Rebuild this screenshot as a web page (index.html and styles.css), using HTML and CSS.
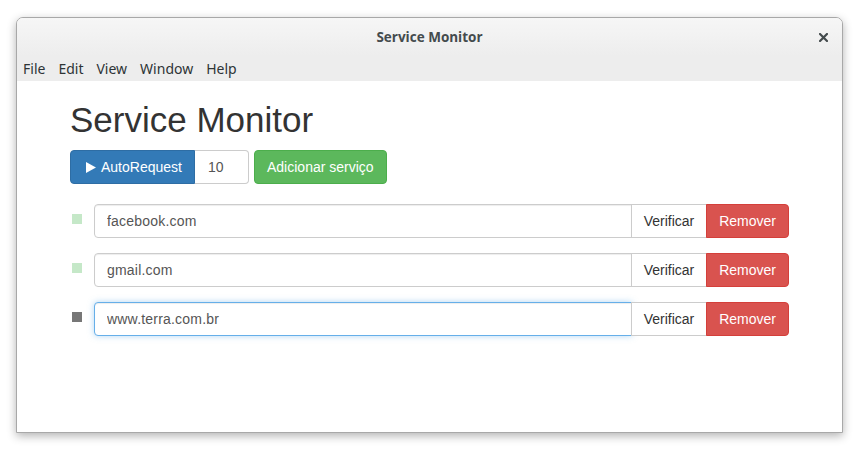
FILE: index.html
```html
<!DOCTYPE html>
<html>
<head>
<meta charset="utf-8">
<link rel="stylesheet" href="styles.css">
</head>
<body>
<div class="desktop">
  <div class="window">
    <div class="titlebar">
      <span class="title">Service Monitor</span>
      <span class="close">
        <svg width="9" height="9" viewBox="0 0 9 9"><path d="M1 1L8 8M8 1L1 8" stroke="#444b4d" stroke-width="2.2" stroke-linecap="square"/></svg>
      </span>
    </div>
    <div class="menubar">
      <span class="menu-item">File</span>
      <span class="menu-item">Edit</span>
      <span class="menu-item">View</span>
      <span class="menu-item">Window</span>
      <span class="menu-item">Help</span>
    </div>
    <div class="content">
      <h1 class="heading">Service Monitor</h1>
      <div class="toolbar">
        <button class="btn btn-primary btn-auto"><svg class="play" width="10" height="11" viewBox="0 0 10 11"><path d="M0 0L10 5.5L0 11Z" fill="#fff"/></svg>AutoRequest</button>
        <input class="num-input" type="text" value="10">
        <button class="btn btn-success btn-add">Adicionar serviço</button>
      </div>
      <div class="services">
        <div class="service-row">
          <span class="status status-ok"></span>
          <div class="input-group">
            <input class="form-control" type="text" value="facebook.com">
            <button class="btn btn-default">Verificar</button>
            <button class="btn btn-danger">Remover</button>
          </div>
        </div>
        <div class="service-row">
          <span class="status status-ok"></span>
          <div class="input-group">
            <input class="form-control" type="text" value="gmail.com">
            <button class="btn btn-default">Verificar</button>
            <button class="btn btn-danger">Remover</button>
          </div>
        </div>
        <div class="service-row">
          <span class="status status-unknown"></span>
          <div class="input-group">
            <input class="form-control focus" type="text" value="www.terra.com.br">
            <button class="btn btn-default">Verificar</button>
            <button class="btn btn-danger">Remover</button>
          </div>
        </div>
      </div>
    </div>
  </div>
</div>
</body>
</html>
```
FILE: styles.css
```css
html, body {
  margin: 0;
  padding: 0;
  background: #ffffff;
}
.desktop {
  padding: 17px 0 0 16px;
  width: 865px;
  height: 461px;
  box-sizing: border-box;
}
.window {
  width: 827px;
  height: 416px;
  box-sizing: border-box;
  border: 1px solid #a8a8a8;
  border-radius: 7px 7px 0 0;
  box-shadow: 0 3px 10px rgba(0, 0, 0, 0.3);
  display: flex;
  flex-direction: column;
  overflow: hidden;
  background: #fff;
}
.titlebar {
  height: 38px;
  flex: none;
  background: linear-gradient(#f6f6f6, #ededed);
  display: flex;
  align-items: center;
  justify-content: center;
  position: relative;
}
.title {
  font-family: "Open Sans", "Noto Sans", sans-serif;
  font-weight: 700;
  font-size: 13.5px;
  color: #444b4d;
}
.close {
  position: absolute;
  right: 14px;
  top: 15px;
  width: 9px;
  height: 9px;
  display: block;
}
.close svg { display: block; }
.menubar {
  height: 25px;
  flex: none;
  background: #ededed;
  display: flex;
  align-items: center;
  padding-left: 6px;
  gap: 13px;
  font-family: "Noto Sans", "Open Sans", sans-serif;
  font-size: 14px;
  color: #2e3436;
}
.menu-item { line-height: 20px; }
.content {
  flex: 1;
  padding: 0 53px;
  font-family: "Liberation Sans", Arial, sans-serif;
  font-size: 14px;
  color: #333;
}
.heading {
  margin: 19px 0 10px;
  font-size: 35px;
  line-height: 40px;
  font-weight: 400;
  color: #333;
}
.toolbar {
  display: flex;
  height: 34px;
  margin-bottom: 20px;
}
.btn {
  font-family: "Liberation Sans", Arial, sans-serif;
  font-size: 14px;
  line-height: 20px;
  padding: 6px 12px;
  border: 1px solid transparent;
  border-radius: 4px;
  box-sizing: border-box;
  height: 34px;
  margin: 0;
  cursor: pointer;
  display: flex;
  align-items: center;
}
.btn-primary {
  background: #337ab7;
  border-color: #2e6da4;
  color: #fff;
}
.btn-auto {
  width: 125px;
  border-radius: 4px 0 0 4px;
  padding-left: 15px;
}
.play {
  display: block;
  margin-right: 5px;
}
.num-input {
  width: 54px;
  height: 34px;
  box-sizing: border-box;
  border: 1px solid #ccc;
  border-left: none;
  border-radius: 0 4px 4px 0;
  padding: 6px 13px;
  font-family: "Liberation Sans", Arial, sans-serif;
  font-size: 14px;
  color: #555;
  margin: 0;
  outline: none;
}
.btn-success {
  background: #5cb85c;
  border-color: #4cae4c;
  color: #fff;
}
.btn-add {
  margin-left: 5px;
}
.services {
  display: flex;
  flex-direction: column;
  gap: 15px;
}
.service-row {
  display: flex;
  align-items: flex-start;
}
.status {
  width: 10px;
  height: 10px;
  margin: 10px 12px 0 2px;
  flex: none;
}
.status-ok { background: #c5e8c8; }
.status-unknown { background: #777777; }
.input-group {
  flex: 1;
  display: flex;
  height: 34px;
}
.form-control {
  flex: 1;
  min-width: 0;
  height: 34px;
  box-sizing: border-box;
  border: 1px solid #ccc;
  border-radius: 4px 0 0 4px;
  padding: 6px 12px;
  font-family: "Liberation Sans", Arial, sans-serif;
  font-size: 14px;
  color: #555;
  letter-spacing: 0.2px;
  margin: 0;
  outline: none;
  box-shadow: inset 0 1px 1px rgba(0, 0, 0, 0.075);
}
.form-control.focus {
  border-color: #66afe9;
  box-shadow: inset 0 1px 1px rgba(0, 0, 0, 0.075), 0 0 6px rgba(102, 175, 233, 0.5);
}
.btn-default {
  background: #fff;
  border-color: #ccc;
  color: #333;
  border-radius: 0;
  margin-left: -1px;
}
.btn-danger {
  background: #d9534f;
  border-color: #d43f3a;
  color: #fff;
  border-radius: 0 4px 4px 0;
  margin-left: -1px;
}
```
